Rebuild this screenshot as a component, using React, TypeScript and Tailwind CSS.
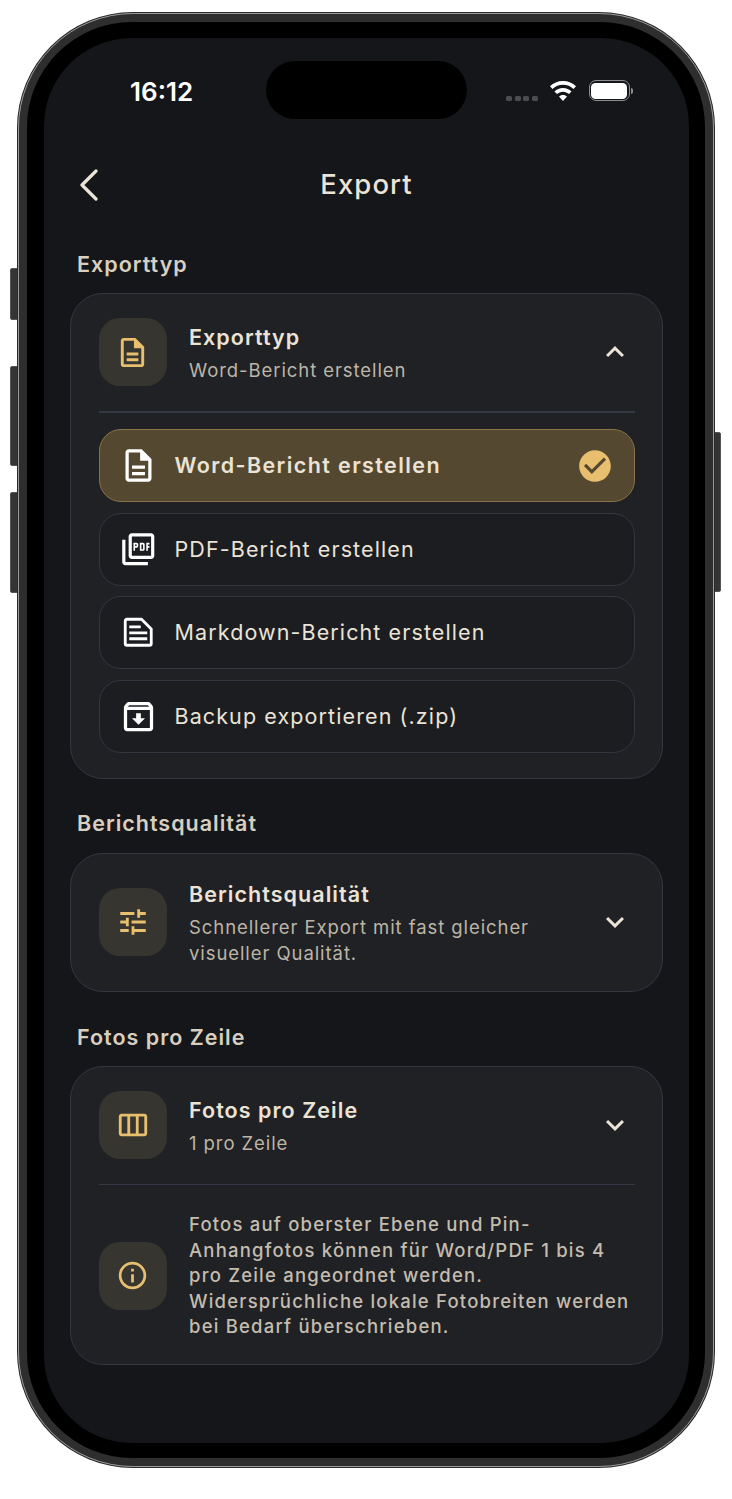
import React from "react";
import { MdOutlineDescription, MdOutlinePictureAsPdf, MdOutlineArchive, MdOutlineTune, MdOutlineViewWeek, MdOutlineInfo, MdCheckCircle, MdKeyboardArrowUp, MdKeyboardArrowDown } from "react-icons/md";

const font = { fontFamily: "Inter, 'Liberation Sans', sans-serif" };

function Notes({ className }: { className?: string }) {
  return (
    <svg viewBox="0 0 30 30" className={className} fill="none" stroke="currentColor" strokeWidth="2.600" strokeLinejoin="round" strokeLinecap="square">
      <path d="M3 4.500a1.500 1.500 0 0 1 1.500-1.500H18l9 9v13.500a1.500 1.500 0 0 1-1.500 1.500h-21a1.500 1.500 0 0 1-1.500-1.500z" />
      <path d="M8 10h8M8 15.500h14M8 21h14" />
    </svg>
  );
}

function IconBox({ children }: { children: React.ReactNode }) {
  return <div className="flex h-[68px] w-[68px] shrink-0 items-center justify-center rounded-[21px] bg-[#37352f] text-[#e8bf6f]">{children}</div>;
}

function Label({ children, className }: { children: React.ReactNode; className: string }) {
  return <div className={`ml-[7px] text-[21.500px] font-semibold leading-[26px] tracking-[1px] text-[#d8cfc0] ${className}`}>{children}</div>;
}

function Head({ icon, title, sub, up, textClass }: { icon: React.ReactNode; title: string; sub: React.ReactNode; up?: boolean; textClass: string }) {
  const chev = "mr-[2px] h-[36px] w-[36px] shrink-0 text-[#ebe3d6]";
  return (
    <div className="flex items-center">
      <IconBox>{icon}</IconBox>
      <div className={`ml-[22.500px] min-w-0 flex-1 ${textClass}`}>
        <div className="text-[21.500px] font-semibold leading-[26px] tracking-[1.05px] text-[#ebe3d6]">{title}</div>
        <div className="mt-[7px] text-[18.500px] leading-[26px] tracking-[0.92px] text-[#bdb5a7]">{sub}</div>
      </div>
      {up ? <MdKeyboardArrowUp className={chev} /> : <MdKeyboardArrowDown className={chev} />}
    </div>
  );
}

function Option({ icon, text }: { icon: React.ReactNode; text: string }) {
  return (
    <div className="flex h-[73px] items-center rounded-[22px] border-[1.500px] border-[#33363f] bg-[#1b1d21] pl-[22.500px] text-[#ebe3d6]">
      <div className="flex w-[32px] justify-center text-white">{icon}</div>
      <span className="ml-[20.500px] text-[21.500px] tracking-[1.1px]">{text}</span>
    </div>
  );
}

export default function App() {
  return (
    <div className="relative h-[1499px] w-[732px] overflow-hidden bg-white pl-[18px] pt-[13px]" style={font}>
      <div className="absolute left-[10px] top-[268px] h-[52px] w-[9px] rounded-l-[2px] border border-[#555] bg-[#343434]" />
      <div className="absolute left-[10px] top-[366px] h-[100px] w-[9px] rounded-l-[2px] border border-[#555] bg-[#343434]" />
      <div className="absolute left-[10px] top-[492px] h-[101px] w-[9px] rounded-l-[2px] border border-[#555] bg-[#343434]" />
      <div className="absolute left-[713px] top-[432px] h-[160px] w-[8px] rounded-r-[2px] border border-[#555] bg-[#343434]" />

      <div className="relative h-[1454px] w-[696px] rounded-[115px] border-[1.500px] border-[#9a9a9a] bg-[#2e2e2e] p-[8px] ring-1 ring-[#2a2a2a]">
        <div className="h-full w-full rounded-[105px] bg-black pb-[15.500px] pl-[17px] pr-[16px] pt-[15.500px]">
          <div className="h-full w-full overflow-hidden rounded-[88px] bg-[#14161a] px-[26px]">
            <div className="mt-[23px] flex h-[58px] items-center">
              <span className="ml-[60px] mt-[4px] w-[70px] text-[26px] font-semibold leading-[32px] text-white">16:12</span>
              <div className="ml-[66px] h-[58px] w-[201px] shrink-0 rounded-[29px] bg-black" />
              <div className="ml-[39px] mt-[2px] flex items-center">
                <div className="mt-[16px] flex gap-[2.500px]">
                  <i className="h-[5px] w-[6px] rounded-[1.500px] bg-[#4a4c50]" />
                  <i className="h-[5px] w-[6px] rounded-[1.500px] bg-[#4a4c50]" />
                  <i className="h-[5px] w-[6px] rounded-[1.500px] bg-[#4a4c50]" />
                  <i className="h-[5px] w-[6px] rounded-[1.500px] bg-[#4a4c50]" />
                </div>
                <svg viewBox="0 0 28 22" className="ml-[11px] h-[22px] w-[28px] text-white" fill="currentColor">
                  <path d="M14 1C8.800 1 4.300 3 1 6.200l2.500 2.700C6.200 6.300 9.900 4.700 14 4.700s7.800 1.600 10.500 4.200L27 6.200C23.700 3 19.200 1 14 1z" />
                  <path d="M14 8c-3.300 0-6.300 1.300-8.500 3.400L8 14.100c1.500-1.500 3.700-2.400 6-2.400s4.500.9 6 2.400l2.500-2.700C20.300 9.300 17.300 8 14 8z" />
                  <path d="M14 15c-1.600 0-3 .6-4 1.600l4 4.400 4-4.400c-1-1-2.400-1.600-4-1.600z" />
                </svg>
                <div className="ml-[12px] flex items-center">
                  <div className="h-[21px] w-[41px] rounded-[7px] border-[1.500px] border-[#8b8d90] p-[1.500px]">
                    <div className="h-full w-full rounded-[4.500px] bg-white" />
                  </div>
                  <div className="ml-[1px] h-[6px] w-[2px] rounded-r-[2px] bg-[#8b8d90]" />
                </div>
              </div>
            </div>

            <div className="relative mt-[45px] flex h-[42px] items-center justify-center">
              <svg viewBox="0 0 20 32" className="absolute left-[9px] h-[32px] w-[20px] text-[#ebe3d6]" fill="none" stroke="currentColor" strokeWidth="3.200" strokeLinecap="round" strokeLinejoin="round">
                <path d="M17 2 L3 16 L17 30" />
              </svg>
              <span className="text-[27.500px] font-medium tracking-[1.05px] text-[#ebe3d6]">Export</span>
            </div>

            <Label className="mt-[45px]">Exporttyp</Label>
            <div className="mt-[16px] rounded-[33px] border-[1.500px] border-[#33373f] bg-[#1f2125] px-[27.500px] pb-[25px] pt-[24.500px]">
              <Head icon={<MdOutlineDescription className="h-[35px] w-[35px]" />} title="Exporttyp" sub="Word-Bericht erstellen" up textClass="pt-[2px]" />
              <div className="mt-[25px] h-[1.500px] bg-[#343845]" />
              <div className="mt-[16.500px] flex flex-col gap-[10.500px]">
                <div className="flex h-[73px] items-center rounded-[22px] border-[1.500px] border-[#8a7349] bg-[#544830] pl-[22.500px] pr-[21px] text-[#ebe3d6]">
                  <div className="flex w-[32px] justify-center text-white"><MdOutlineDescription className="h-[39px] w-[39px] shrink-0" /></div>
                  <span className="ml-[20.500px] flex-1 text-[21.500px] font-semibold tracking-[1.4px]">Word-Bericht erstellen</span>
                  <MdCheckCircle className="mr-[-1.500px] h-[38px] w-[38px] text-[#e8bf6f]" />
                </div>
                <Option icon={<MdOutlinePictureAsPdf className="h-[38.500px] w-[38.500px] shrink-0" />} text="PDF-Bericht erstellen" />
                <Option icon={<Notes className="h-[32.500px] w-[32.500px] shrink-0" />} text="Markdown-Bericht erstellen" />
                <Option icon={<MdOutlineArchive className="h-[39px] w-[39px] shrink-0" />} text="Backup exportieren (.zip)" />
              </div>
            </div>

            <Label className="mt-[31px]">Berichtsqualität</Label>
            <div className="mt-[17px] rounded-[33px] border-[1.500px] border-[#33373f] bg-[#1f2125] px-[27.500px] py-[25px]">
              <Head
                icon={<MdOutlineTune className="h-[34px] w-[34px]" />}
                title="Berichtsqualität"
                sub={<>Schnellerer Export mit fast gleicher<br />visueller Qualität.</>}
                textClass="pt-[2px]"
              />
            </div>

            <Label className="mt-[32px]">Fotos pro Zeile</Label>
            <div className="mt-[16px] rounded-[33px] border-[1.500px] border-[#33373f] bg-[#1f2125] px-[27.500px] pb-[24px] pt-[24px]">
              <Head icon={<MdOutlineViewWeek className="h-[34px] w-[34px]" />} title="Fotos pro Zeile" sub="1 pro Zeile" textClass="pt-[4px]" />
              <div className="mt-[25px] h-[1.500px] bg-[#343845]" />
              <div className="mt-[27px] flex items-center">
                <IconBox><MdOutlineInfo className="h-[33px] w-[33px]" /></IconBox>
                <p className="ml-[22.500px] whitespace-nowrap text-[18.500px] font-medium leading-[25.500px] tracking-[1.2px] text-[#c4bcae]">
                  Fotos auf oberster Ebene und Pin-<br />Anhangfotos können für Word/PDF 1 bis 4<br />pro Zeile angeordnet werden.<br />Widersprüchliche lokale Fotobreiten werden<br />bei Bedarf überschrieben.
                </p>
              </div>
            </div>
          </div>
        </div>
      </div>
    </div>
  );
}
